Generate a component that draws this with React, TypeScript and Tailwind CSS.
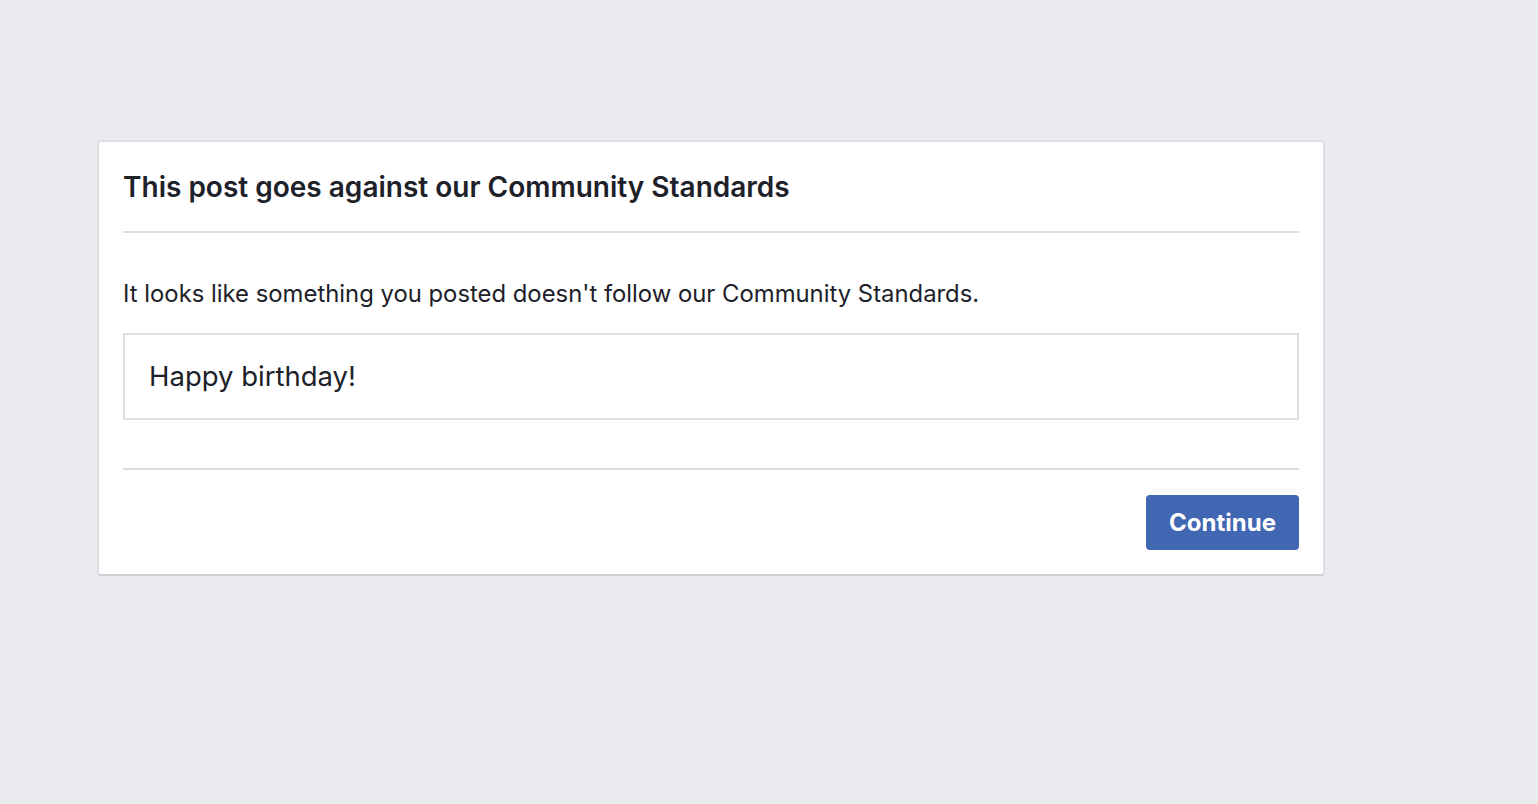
import React from 'react';

const App: React.FC = () => {
    return (
        <div className="min-h-[804px] w-full bg-[#e9ebee] pt-[140px] font-['Inter','Liberation_Sans',Arial,sans-serif] text-[#1d2129]">
            <div className="ml-[97px] w-[1228px] rounded-[4px] border-2 border-[#dddfe2] border-b-[#ccd0d5] bg-white px-6 pb-6">
                {/* Header */}
                <div className="border-b-2 border-[#dadde1] pt-6 pb-[23px]">
                    <h2 className="text-[28px] font-semibold leading-[42px]">This post goes against our Community Standards</h2>
                </div>

                {/* Body */}
                <div className="border-b-2 border-[#dadde1] pt-[46px] pb-[48px]">
                    <p className="text-[23.85px] leading-[30px]">
                        It looks like something you posted doesn't follow our Community Standards.
                    </p>
                    <div className="mt-6 flex h-[87px] items-center border-2 border-[#dddfe2] px-6">
                        <span className="text-[27.5px]">Happy birthday!</span>
                    </div>
                </div>

                {/* Footer */}
                <div className="flex justify-end pt-[25px]">
                    <button className="h-[55px] w-[153px] rounded-[4px] bg-[#4267b2] text-[24px] font-bold text-white">
                        Continue
                    </button>
                </div>
            </div>
        </div>
    );
};

export default App;
